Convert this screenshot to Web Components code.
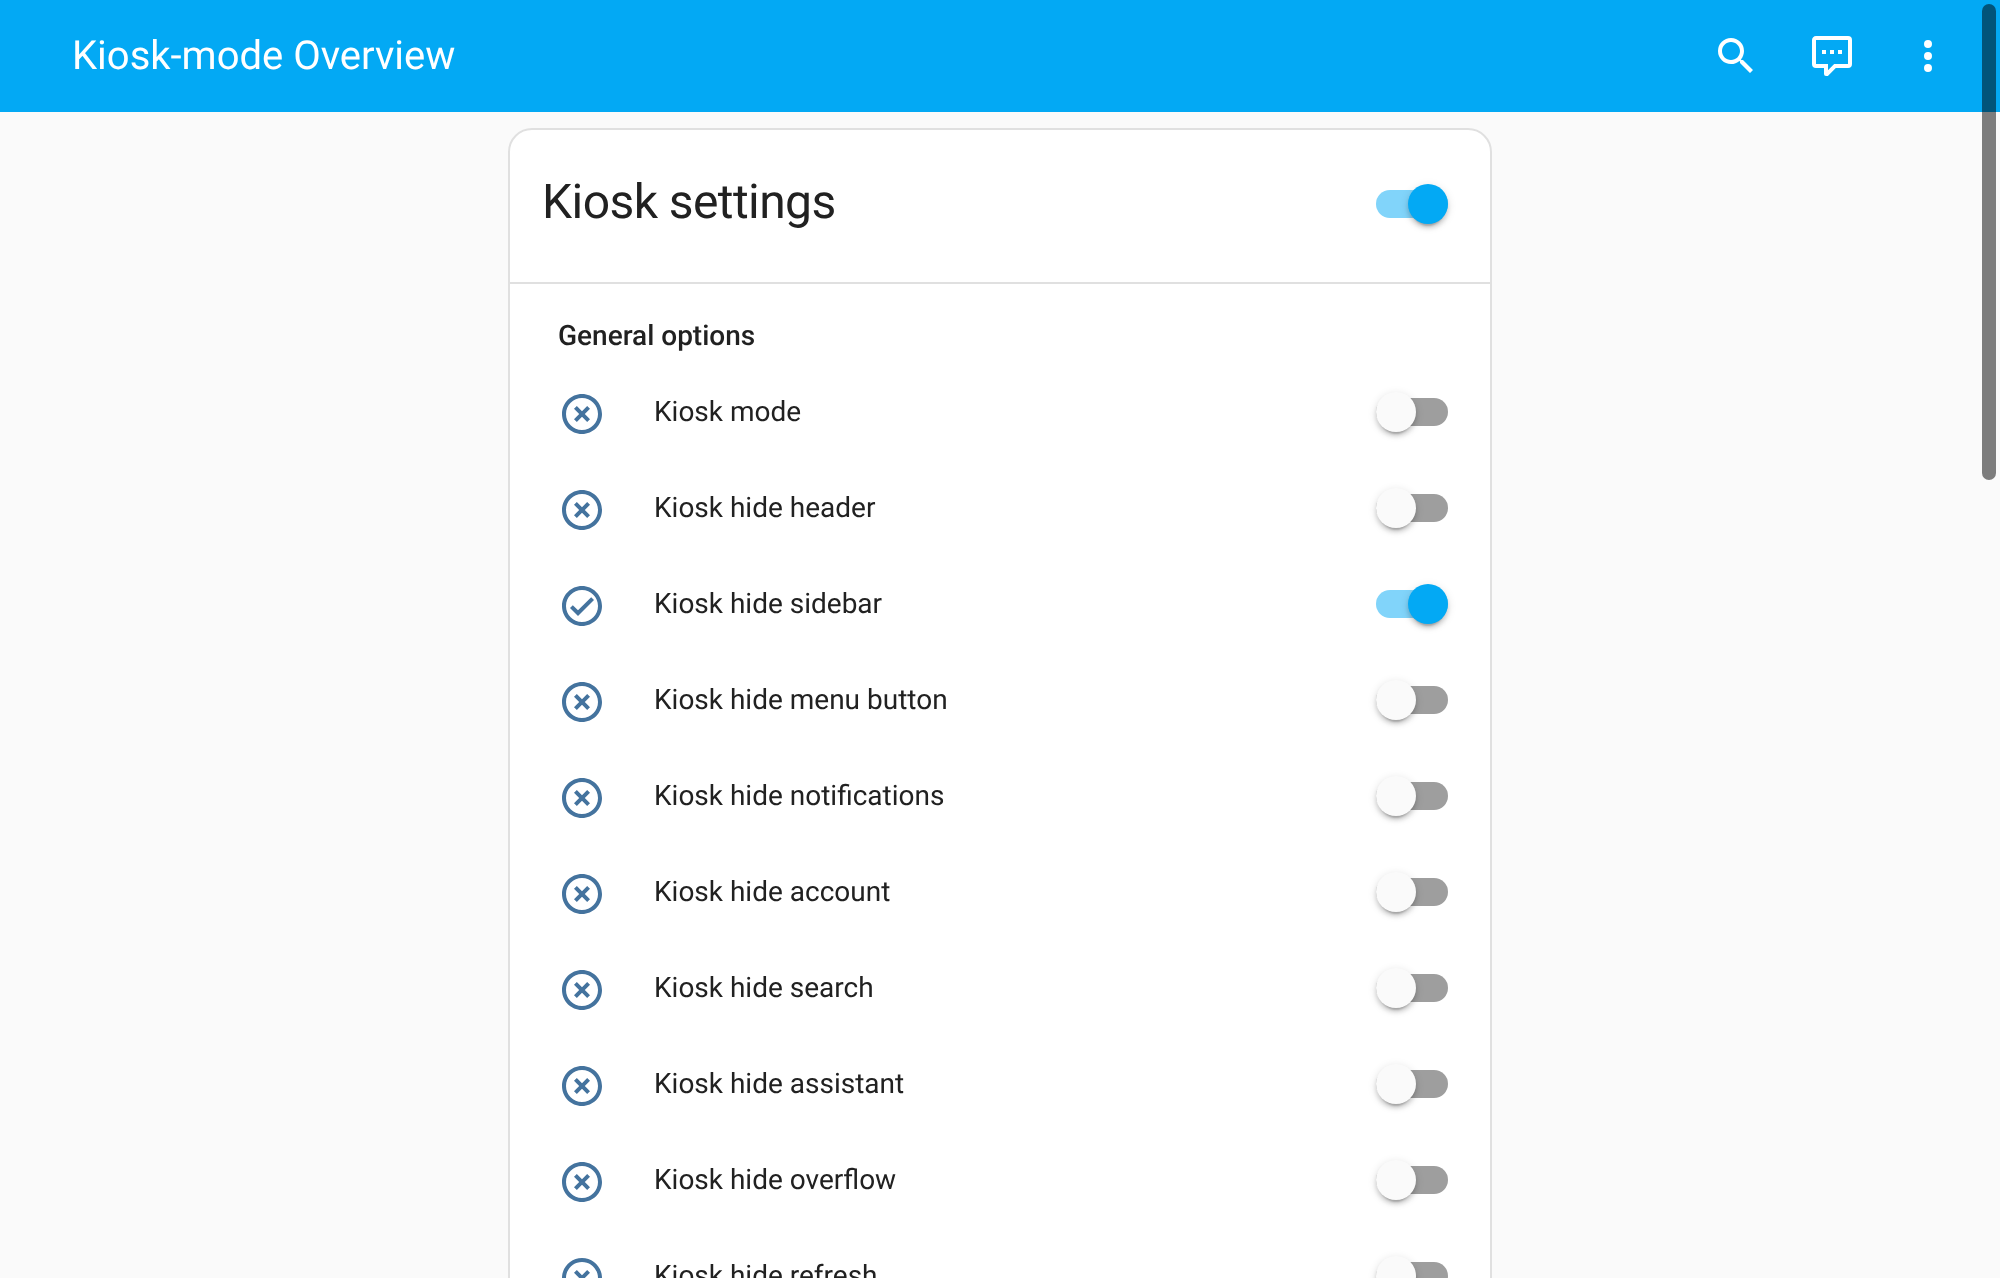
<!DOCTYPE html>
<html lang="en"><head><meta charset="utf-8"><title>Kiosk-mode Overview</title>
<style>
html,body{margin:0;padding:0;height:1278px;overflow:hidden;background:#fafafa;font-family:Roboto,"Liberation Sans",sans-serif;color:#212121;text-rendering:geometricPrecision}
</style></head><body>
<kiosk-app>
  <kiosk-header slot="header" title="Kiosk-mode Overview"></kiosk-header>
  <kiosk-card heading="Kiosk settings" on>
    <kiosk-section>General options</kiosk-section>
    <kiosk-row>Kiosk mode</kiosk-row>
    <kiosk-row>Kiosk hide header</kiosk-row>
    <kiosk-row on>Kiosk hide sidebar</kiosk-row>
    <kiosk-row>Kiosk hide menu button</kiosk-row>
    <kiosk-row>Kiosk hide notifications</kiosk-row>
    <kiosk-row>Kiosk hide account</kiosk-row>
    <kiosk-row>Kiosk hide search</kiosk-row>
    <kiosk-row>Kiosk hide assistant</kiosk-row>
    <kiosk-row>Kiosk hide overflow</kiosk-row>
    <kiosk-row>Kiosk hide refresh</kiosk-row>
  </kiosk-card>
</kiosk-app>
<script>
const P={
 search:"M9.5,3A6.5,6.5 0 0,1 16,9.5C16,11.11 15.41,12.59 14.44,13.73L14.71,14H15.5L20.5,19L19,20.5L14,15.5V14.71L13.73,14.44C12.59,15.41 11.11,16 9.5,16A6.5,6.5 0 0,1 3,9.5A6.5,6.5 0 0,1 9.5,3M9.5,5C7,5 5,7 5,9.5C5,12 7,14 9.5,14C12,14 14,12 14,9.5C14,7 12,5 9.5,5Z",
 chat:"M9,22A1,1 0 0,1 8,21V18H4A2,2 0 0,1 2,16V4C2,2.89 2.9,2 4,2H20A2,2 0 0,1 22,4V16A2,2 0 0,1 20,18H13.9L10.2,21.71C10,21.9 9.75,22 9.5,22V22H9M10,16V19.08L13.08,16H20V4H4V16H10M17,11H15V9H17V11M13,11H11V9H13V11M9,11H7V9H9V11Z",
 dots:"M12,16A2,2 0 0,1 14,18A2,2 0 0,1 12,20A2,2 0 0,1 10,18A2,2 0 0,1 12,16M12,10A2,2 0 0,1 14,12A2,2 0 0,1 12,14A2,2 0 0,1 10,12A2,2 0 0,1 12,10M12,4A2,2 0 0,1 14,6A2,2 0 0,1 12,8A2,2 0 0,1 10,6A2,2 0 0,1 12,4Z",
 off:"M12,20C7.59,20 4,16.41 4,12C4,7.59 7.59,4 12,4C16.41,4 20,7.59 20,12C20,16.41 16.41,20 12,20M12,2C6.47,2 2,6.47 2,12C2,17.53 6.47,22 12,22C17.53,22 22,17.53 22,12C22,6.47 17.53,2 12,2M14.59,8L12,10.59L9.41,8L8,9.41L10.59,12L8,14.59L9.41,16L12,13.41L14.59,16L16,14.59L13.41,12L16,9.41L14.59,8Z",
 on:"M12 2C6.5 2 2 6.5 2 12S6.5 22 12 22 22 17.5 22 12 17.5 2 12 2M12 20C7.59 20 4 16.41 4 12S7.59 4 12 4 20 7.59 20 12 16.41 20 12 20M16.59 7.58L10 14.17L7.41 11.59L6 13L10 17L18 9L16.59 7.58Z"};
const icon=(n)=>`<svg width="48" height="48" viewBox="0 0 24 24" fill="currentColor" aria-hidden="true"><path d="${P[n]}"/></svg>`;
function el(name,render){customElements.define(name,class extends HTMLElement{
  constructor(){super();this.attachShadow({mode:"open"});}
  connectedCallback(){this.shadowRoot.innerHTML=render(this);}
});}
el("kiosk-app",()=>`<style>
:host{display:block;position:relative;width:2000px;height:1278px;overflow:hidden;will-change:transform}
main{display:flex;justify-content:center;padding:16px 0 0}
.thumb{position:absolute;left:1982px;top:4px;width:14px;height:476px;border-radius:7px;background:rgba(0,0,0,.5)}
</style><slot name="header"></slot><main><slot></slot></main><div class="thumb"></div>`);
el("kiosk-header",h=>`<style>
:host{display:flex;align-items:center;height:112px;background:#03a9f4;color:#fff;padding-left:72px}
.t{flex:1;font-size:40px;line-height:112px;font-weight:400;white-space:nowrap}
.i{display:flex;gap:48px;padding-right:48px}
.b{width:48px;height:48px;display:block}
svg{display:block}
</style><div class="t">${h.getAttribute("title")}</div><div class="i">
<span class="b">${icon("search")}</span><span class="b">${icon("chat")}</span><span class="b">${icon("dots")}</span></div>`);
el("kiosk-card",c=>`<style>
:host{display:block;width:984px;box-sizing:border-box;background:#fff;border:2px solid #e0e0e0;border-radius:24px;flex:none}
.h{display:flex;align-items:center;justify-content:space-between;height:152px;padding:0 42px 0 32px;border-bottom:2px solid #e0e0e0}
h1{margin:0;font-size:48px;font-weight:400;line-height:64px;letter-spacing:-.012em;color:#212121;position:relative;top:-4px}
kiosk-switch{position:relative;top:-2px}
.c{padding:32px 42px 0 48px}
</style><div class="h"><h1>${c.getAttribute("heading")}</h1><kiosk-switch ${c.hasAttribute("on")?"on":""}></kiosk-switch></div><div class="c"><slot></slot></div>`);
el("kiosk-section",()=>`<style>:host{display:block;font-size:28px;font-weight:500;line-height:40px;color:#212121;height:48px}</style><slot></slot>`);
el("kiosk-row",r=>`<style>
:host{display:flex;align-items:center;height:96px;font-size:28px;line-height:40px;color:#212121}
.i{width:48px;height:48px;color:#44739e;margin-right:48px;flex:none;position:relative;top:2px}
svg{display:block}
.l{flex:1;white-space:nowrap}
</style><span class="i">${icon(r.hasAttribute("on")?"on":"off")}</span><span class="l"><slot></slot></span><kiosk-switch ${r.hasAttribute("on")?"on":""}></kiosk-switch>`);
el("kiosk-switch",s=>{const on=s.hasAttribute("on");return `<style>
:host{display:block;width:72px;height:28px;flex:none}
.w{display:block;position:relative;width:72px;height:28px}
.t{display:block;width:72px;height:28px;border-radius:14px;background:${on?"#81d4fa":"#9e9e9e"}}
.k{position:absolute;top:-6px;left:${on?32:0}px;width:40px;height:40px;border-radius:50%;background:${on?"#03a9f4":"#fafafa"};
box-shadow:0 6px 2px -4px rgba(0,0,0,.2),0 4px 4px 0 rgba(0,0,0,.14),0 2px 10px 0 rgba(0,0,0,.12)}
</style><span class="w"><span class="t"></span><span class="k"></span></span>`;});
</script></body></html>
